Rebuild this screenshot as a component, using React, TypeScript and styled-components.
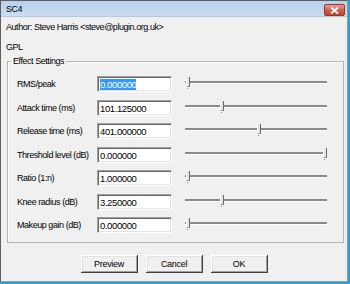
import styled, { createGlobalStyle } from 'styled-components';

const GlobalStyle = createGlobalStyle`
  html, body {
    margin: 0;
    padding: 0;
    background: #2a9fd8;
  }
  body {
    font-family: "Liberation Sans", Arial, sans-serif;
    font-size: 9px;
    letter-spacing: -0.45px;
    color: #000;
  }
`;

const Window = styled.div`
  display: flex;
  flex-direction: column;
  box-sizing: border-box;
  width: 348px;
  height: 282px;
  background: #f0f0f0;
  border: 1px solid #9a9a9a;
  border-left-color: #5f5f5f;
  border-top-color: #5f5f5f;
`;

const TitleBar = styled.div`
  display: flex;
  align-items: center;
  height: 15px;
  padding: 0 2px 0 5px;
  background: linear-gradient(#b8d0ea, #cadcf0);
  border-bottom: 1px solid #b4c8de;
`;

const Title = styled.span`
  flex: 1;
  font-size: 9px;
`;

const CloseButton = styled.div`
  display: flex;
  align-items: center;
  justify-content: center;
  box-sizing: border-box;
  width: 21px;
  height: 12px;
  margin-top: 3px;
  border: 1px solid #8d3a2e;
  border-radius: 2px;
  background: linear-gradient(#e9a595, #d0604b 50%, #c2412c);
`;

const Info = styled.div`
  display: flex;
  flex-direction: column;
  gap: 8px;
  padding: 4px 5px 0;
`;

const InfoLine = styled.div`
  line-height: 12px;
  height: 12px;
`;

const Group = styled.fieldset`
  display: flex;
  flex-direction: column;
  gap: 7.5px;
  margin: 2px 3px 0 6px;
  padding: 9px 15px 9px 9px;
  border: 1px solid #b5b5b5;
  box-shadow: inset 1px 1px 0 #fff;
  min-width: 0;
`;

const Legend = styled.legend`
  padding: 0 2px;
  margin-left: -6px;
  line-height: 12px;
`;

const Row = styled.div`
  display: grid;
  grid-template-columns: 80px 75px 155px;
  align-items: center;
  height: 16px;
`;

const Label = styled.span`
  white-space: nowrap;
`;

const TextBox = styled.div`
  box-sizing: border-box;
  height: 16px;
  padding: 2px 2px 0;
  background: #fff;
  border: 1px solid;
  border-color: #a0a0a0 #fff #fff #a0a0a0;
  box-shadow: inset 1px 1px 0 #696969, inset -1px -1px 0 #e3e3e3;
  line-height: 11px;
  font-size: 9.5px;
  letter-spacing: -0.4px;
  white-space: nowrap;
  overflow: hidden;
`;

const Selected = styled.span`
  background: #3399ff;
  color: #fff;
`;

const Slider = styled.div`
  position: relative;
  width: 142px;
  height: 16px;
  margin-left: 13px;
`;

const Track = styled.div`
  position: absolute;
  left: 0;
  right: 0;
  top: 5px;
  height: 2px;
  background: #8a8a8a;
  border-bottom: 1px solid #fff;
`;

const Thumb = styled.div`
  position: absolute;
  top: 1px;
  box-sizing: border-box;
  width: 4px;
  height: 10px;
  background: #e4e4e4;
  border-left: 1px solid #fff;
  border-right: 1px solid #6a6a6a;
  border-bottom: 1px solid #a0a0a0;

  &::after {
    content: '';
    position: absolute;
    left: 0;
    top: 11px;
    width: 1px;
    height: 1px;
    background: #888;
  }
`;

const ButtonRow = styled.div`
  display: flex;
  justify-content: center;
  gap: 8px;
  margin-top: 12px;
`;

const Button = styled.button`
  box-sizing: border-box;
  width: 57px;
  height: 18px;
  padding: 0;
  background: #f0f0f0;
  border: none;
  box-shadow: inset -1px -1px 0 #404040, inset 1px 1px 0 #fff,
    inset -2px -2px 0 #a0a0a0, inset 2px 2px 0 #e3e3e3;
  font-family: "Liberation Sans", Arial, sans-serif;
  font-size: 9px;
  letter-spacing: -0.3px;
  color: #000;
`;

const params = [
  { label: 'RMS/peak', value: '0.000000', pos: 0, selected: true },
  { label: 'Attack time (ms)', value: '101.125000', pos: 0.25 },
  { label: 'Release time (ms)', value: '401.000000', pos: 0.52 },
  { label: 'Threshold level (dB)', value: '0.000000', pos: 1 },
  { label: 'Ratio (1:n)', value: '1.000000', pos: 0 },
  { label: 'Knee radius (dB)', value: '3.250000', pos: 0.25 },
  { label: 'Makeup gain (dB)', value: '0.000000', pos: 0 },
];

export default function App() {
  return (
    <>
      <GlobalStyle />
      <Window>
        <TitleBar>
          <Title>SC4</Title>
          <CloseButton>
            <svg width="9" height="7" viewBox="0 0 9 7">
              <path d="M1 0.5 L8 6.5 M8 0.5 L1 6.5" stroke="#fff" strokeWidth="1.8" />
            </svg>
          </CloseButton>
        </TitleBar>
        <Info>
          <InfoLine>Author: Steve Harris &lt;steve@plugin.org.uk&gt;</InfoLine>
          <InfoLine>GPL</InfoLine>
        </Info>
        <Group>
          <Legend>Effect Settings</Legend>
          {params.map((p) => (
            <Row key={p.label}>
              <Label>{p.label}</Label>
              <TextBox>{p.selected ? <Selected>{p.value}</Selected> : p.value}</TextBox>
              <Slider>
                <Track />
                <Thumb style={{ left: `${1 + p.pos * 137}px` }} />
              </Slider>
            </Row>
          ))}
        </Group>
        <ButtonRow>
          <Button>Preview</Button>
          <Button>Cancel</Button>
          <Button>OK</Button>
        </ButtonRow>
      </Window>
    </>
  );
}
